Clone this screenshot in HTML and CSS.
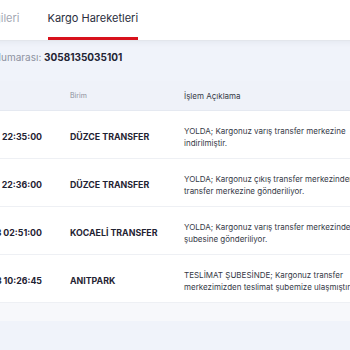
FILE: index.html
```html
<!DOCTYPE html>
<html lang="tr">
<head>
<meta charset="utf-8">
<link rel="stylesheet" href="styles.css">
</head>
<body>
<div class="page">
  <div class="tabs">
    <div class="tab">Gönderi Bilgileri</div>
    <div class="tab active">Kargo Hareketleri</div>
  </div>
  <div class="content">
    <div class="tracking"><span class="label">Gönderi Numarası:</span> <span class="number">3058135035101</span></div>
    <div class="table">
      <div class="row head">
        <div class="c1 h1">Tarih</div>
        <div class="c2">Birim</div>
        <div class="c3">İşlem Açıklama</div>
      </div>
      <div class="row">
        <div class="c1 strong"><span class="date">12.10.2023</span><span>22:35:00</span></div>
        <div class="c2 strong">DÜZCE TRANSFER</div>
        <div class="c3">YOLDA; Kargonuz varış transfer merkezine<br>indirilmiştir.</div>
      </div>
      <div class="row">
        <div class="c1 strong"><span class="date">12.10.2023</span><span>22:36:00</span></div>
        <div class="c2 strong">DÜZCE TRANSFER</div>
        <div class="c3">YOLDA; Kargonuz çıkış transfer merkezinden varış<br>transfer merkezine gönderiliyor.</div>
      </div>
      <div class="row">
        <div class="c1 strong"><span class="date near">13.10.2023</span><span>02:51:00</span></div>
        <div class="c2 strong">KOCAELİ TRANSFER</div>
        <div class="c3">YOLDA; Kargonuz varış transfer merkezinden teslimat<br>şubesine gönderiliyor.</div>
      </div>
      <div class="row">
        <div class="c1 strong"><span class="date near">13.10.2023</span><span>10:26:45</span></div>
        <div class="c2 strong">ANITPARK</div>
        <div class="c3">TESLİMAT ŞUBESİNDE; Kargonuz transfer<br>merkezimizden teslimat şubemize ulaşmıştır.</div>
      </div>
      <div class="foot"></div>
    </div>
  </div>
</div>
</body>
</html>
```
FILE: styles.css
```css
html, body {
  margin: 0;
  padding: 0;
}
body {
  width: 350px;
  height: 350px;
  overflow: hidden;
  background: #f0f3fa;
  font-family: "Inter", "Open Sans", sans-serif;
  color: #1f2333;
}
.page {
  margin-left: -100px;
  width: 700px;
}
.tabs {
  display: flex;
  gap: 28px;
  height: 40px;
  background: #fff;
  padding-left: 37px;
  border-bottom: 1px solid #e3e6ec;
  position: relative;
  z-index: 1;
  box-shadow: 0 2px 5px rgba(40, 50, 80, 0.05);
}
.tab {
  font-size: 11px;
  line-height: 32px;
  color: #a3a7b3;
  padding-top: 2px;
}
.tab.active {
  color: #2a2e3d;
  border-bottom: 3px solid #d8121c;
  box-sizing: border-box;
  height: 40px;
}
.content {
  padding-top: 9px;
}
.tracking {
  font-size: 10px;
  line-height: 14px;
  padding-left: 53px;
  height: 31px;
}
.tracking .label {
  color: #8d91a0;
}
.tracking .number {
  font-weight: 700;
  color: #1f2333;
}
.table {
  background: #fff;
}
.row {
  display: grid;
  grid-template-columns: 150px 114px 260px;
  padding-left: 20px;
  padding-top: 4px;
  align-items: center;
  height: 48px;
  box-sizing: border-box;
  border-bottom: 1.5px solid #eef0f4;
}
.row.head {
  height: 30px;
  padding-top: 0;
  background: #eff2f9;
  border-bottom: 1px solid #e5e9f1;
  font-size: 7px;
  color: #8b8f9c;
}
.c1 {
  text-align: right;
  padding-right: 28px;
}
.c1.h1 {
  text-align: left;
}
.date {
  margin-right: 5px;
}
.date.near {
  margin-right: 2px;
}
.strong {
  font-weight: 700;
  font-size: 8.8px;
  color: #1f2333;
}
.c3 {
  font-size: 8px;
  line-height: 12px;
  color: #353946;
  white-space: nowrap;
}
.foot {
  height: 18px;
  background: #f7f8fb;
}
```
